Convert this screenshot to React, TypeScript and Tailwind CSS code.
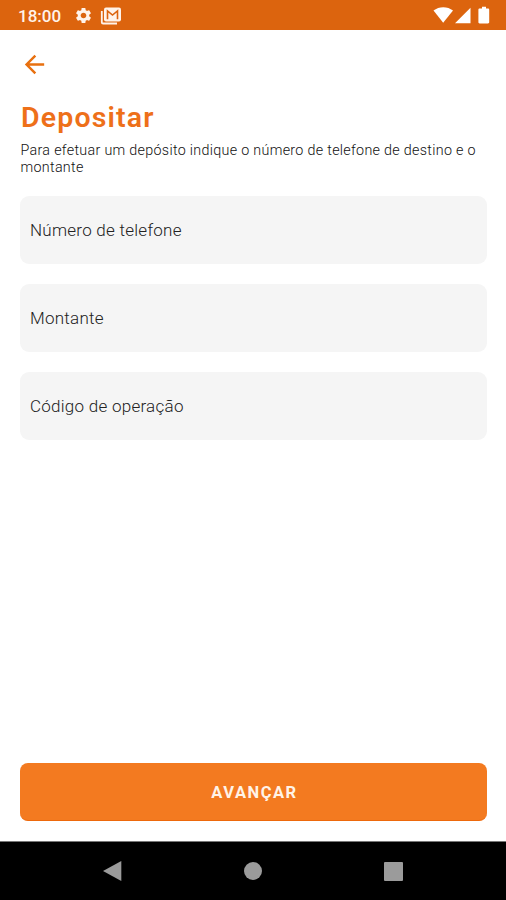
import { MdArrowBack, MdSettings } from 'react-icons/md';

const fields = ['Número de telefone', 'Montante', 'Código de operação'];

function StatusBar() {
  return (
    <div className="flex h-[30px] items-center justify-between bg-[#dc640e] pl-[18px] pr-[15px] text-[#fff3ea]">
      <div className="flex items-center pt-[1px]">
        <span className="w-[56px] text-[17px] leading-5 font-medium">18:00</span>
        <MdSettings size={19} />
        <svg className="ml-[7px]" width="22" height="18" viewBox="0 0 22 18" fill="none">
          <path d="M1.8 4v11.2c0 .8.6 1.3 1.3 1.3H17" stroke="currentColor" strokeWidth="1.8" />
          <rect x="4" y="0.5" width="17" height="14" rx="2" fill="currentColor" />
          <path d="M7.5 12.2V4l5 4 5-4v8.2" stroke="#dc640e" strokeWidth="1.6" />
        </svg>
      </div>
      <svg width="58" height="18" viewBox="0 0 58 18" fill="#ffffff">
        <path d="M0.5 4.6C6 .1 14.5.1 20 4.6L10.2 16.8z" />
        <path d="M37.5 1.8v15.4H22z" />
        <path d="M49 .8h4v1.8h2c.7 0 1.2.5 1.2 1.2v12.4c0 .7-.5 1.2-1.2 1.2h-8.4c-.7 0-1.2-.5-1.2-1.2V3.8c0-.7.5-1.2 1.2-1.2H49z" />
      </svg>
    </div>
  );
}

function NavBar() {
  return (
    <div className="grid h-[59px] grid-cols-[184px_138px_1fr] items-center border-t border-[#777777] bg-black text-[#9b9b9b]">
      <svg className="ml-[102px]" width="20" height="22" viewBox="0 0 20 22" fill="currentColor">
        <path d="M19.3 1v20L1 11z" />
      </svg>
      <div className="mx-auto size-[18px] rounded-full bg-[#9b9b9b]" />
      <div className="ml-[62px] size-[19px] rounded-[1px] bg-[#9b9b9b]" />
    </div>
  );
}

export default function App() {
  return (
    <div className="flex h-[900px] w-[506px] flex-col bg-white font-['Roboto',sans-serif]">
      <StatusBar />

      <main className="flex flex-1 flex-col pr-[19px] pb-[20px] pl-[20px]">
        <button className="mt-[21px] ml-[1px] flex size-[27px] items-center justify-center text-[#e8700f]" aria-label="Voltar">
          <MdArrowBack size={29} className="shrink-0" />
        </button>

        <h1 className="mt-[23px] pl-px text-[28.5px] leading-[34px] font-semibold tracking-[1.15px] text-[#ee7019]">Depositar</h1>
        <p className="mt-[7px] w-[467px] pl-[0.5px] text-[14.3px] leading-[17px] font-light tracking-[0.31px] text-[#111111]">
          Para efetuar um depósito indique o número de telefone de destino e o montante
        </p>

        <div className="mt-[20px] flex flex-col gap-[20px]">
          {fields.map(label => (
            <div key={label} className="flex h-[68px] items-center rounded-[9px] bg-[#f5f5f5] pt-px pl-[10px] text-[17px] font-[350] tracking-[0.26px] text-[#222222]">
              {label}
            </div>
          ))}
        </div>

        <button className="mt-auto h-[58px] rounded-[8px] border-b border-[#ed680b] bg-[#f37a20] pt-[4px] pl-[2px] text-[16.5px] font-bold tracking-[1.5px] text-[#fff3e8]">
          AVANÇAR
        </button>
      </main>

      <NavBar />
    </div>
  );
}
